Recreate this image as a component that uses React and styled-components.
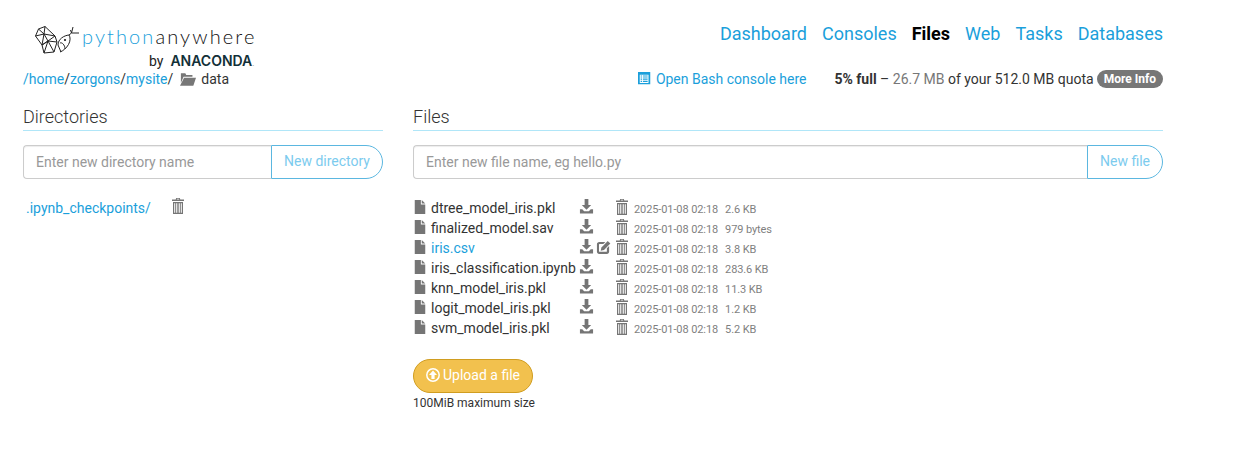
import styled, { createGlobalStyle } from "styled-components";

const files = [
  { name: "dtree_model_iris.pkl", size: "2.6 KB" },
  { name: "finalized_model.sav", size: "979 bytes" },
  { name: "iris.csv", size: "3.8 KB", editable: true },
  { name: "iris_classification.ipynb", size: "283.6 KB" },
  { name: "knn_model_iris.pkl", size: "11.3 KB" },
  { name: "logit_model_iris.pkl", size: "1.2 KB" },
  { name: "svm_model_iris.pkl", size: "5.2 KB" },
];

const navLinks = ["Dashboard", "Consoles", "Files", "Web", "Tasks", "Databases"];

function Glyph({ size = 16, children, color = "#777" }) {
  return (
    <svg width={size} height={size} viewBox="0 0 16 16" fill={color} style={{ display: "block", flex: "none" }}>
      {children}
    </svg>
  );
}

const FileIcon = () => (
  <Glyph size={14} color="#757575">
    <path d="M2 0h7v5h5v11H2z" />
    <path d="M10 0l4 4h-4z" />
  </Glyph>
);

const DownloadIcon = () => (
  <Glyph size={15} color="#757575">
    <path d="M6 0h4v6.500h3l-5 5-5-5h3z" />
    <path d="M1 11h2.500l2 2h5l2-2H15v4.500H1z" />
  </Glyph>
);

const EditIcon = () => (
  <Glyph size={15} color="#757575">
    <path d="M3.500 2H10L7.800 4.200H3.800c-.4 0-.6.2-.6.6v7.200c0 .4.2.6.6.6h7.200c.4 0 .6-.2.6-.6V8.800L14 6.400v6.200C14 13.900 13 15 11.600 15H3.400C2 15 1 13.900 1 12.600V4.400C1 3 2 2 3.500 2z" />
    <path d="M12.500 1l2.800 2.800-6.800 6.900-3.500.8.800-3.600z" />
  </Glyph>
);

const TrashIcon = () => (
  <Glyph size={16} color="#757575">
    <path d="M6.200 0h3.600l.5 1.400H14v1.600H2V1.400h3.700zM7 .8l-.2.6h2.400L9 .8z" fillRule="evenodd" />
    <path d="M3 4h10v12H3zM4.200 5.200v9.600h1V5.200zm2 0v9.600h1.100V5.200zm2.500 0v9.600h1.100V5.200zm2.100 0v9.600h1V5.200z" fillRule="evenodd" />
  </Glyph>
);

const FolderOpenIcon = () => (
  <svg width="16" height="13" viewBox="0 0 18 14" fill="#777" style={{ display: "block" }}>
    <path d="M1 0h5l1 2h7v2H4L1 11z" />
    <path d="M4.600 5H18l-3 9H0z" />
  </svg>
);

const ListIcon = () => (
  <Glyph size={14} color="#1b9fdb">
    <path
      fillRule="evenodd"
      d="M0 0h14v14H0zM2 3v9.500h10V3zM3 4h1.600v1.200H3zm2.600 0H11v1.200H5.600zM3 6.200h1.600v1.200H3zm2.600 0H11v1.200H5.600zM3 8.300h1.600v1.200H3zm2.600 0H11v1.200H5.600zM3 10.300h1.600v1.200H3zm2.600 0H11v1.200H5.600z"
    />
  </Glyph>
);

const UploadIcon = () => (
  <svg width="14" height="14" viewBox="0 0 14 14" style={{ display: "block", flex: "none" }}>
    <circle cx="7" cy="7" r="6.200" fill="none" stroke="#fff" strokeWidth="1.500" />
    <path d="M7 2.500L11 7H8.600v4H5.400V7H3z" fill="#fff" />
  </svg>
);

const FishLogo = () => (
  <svg width="45" height="30" viewBox="0 0 45 30" fill="none" stroke="#222" strokeWidth="1" strokeLinejoin="round" style={{ display: "block" }}>
    <path d="M0.500 10L3.500 3 10 0.500 20 10 22 16 19 26 9 27 7 19 0.500 10z" />
    <path d="M3.500 3L9 8 10 0.500M9 8L20 10 13 15 9 8 0.500 10M9 8L7 19 13 15 19 26M13 15L9 27M13 15L22 16M7 19L13 15" />
    <path d="M23 19c0-6 6-9.500 11-10 1.500 2 1.500 6-.5 9.500C31.500 22 28 25 25 26" />
    <path d="M23 19l3 7M25 17c2-1 5 2 5 6" />
    <path d="M34 9l2.500-2L38 1M36.500 7L44 7M36.500 7l-1-3" />
    <circle cx="30" cy="14" r="0.700" fill="#222" />
  </svg>
);

export default function App() {
  return (
    <>
      <GlobalStyle />
      <Page>
        <Header>
          <Logo>
            <FishLogo />
            <LogoText>
              <Wordmark>
                <b>python</b>anywhere
              </Wordmark>
              <ByLine>
                by <strong>ANACONDA</strong><small>.</small>
              </ByLine>
            </LogoText>
          </Logo>
          <Nav>
            {navLinks.map(link => (
              <NavLink key={link} $active={link === "Files"}>{link}</NavLink>
            ))}
          </Nav>
        </Header>

        <InfoBar>
          <Breadcrumb>
            <a>/home</a>/<a>zorgons</a>/<a>mysite</a>/
            <FolderSlot><FolderOpenIcon /></FolderSlot>
            data
          </Breadcrumb>
          <Status>
            <BashLink><ListIcon /> Open Bash console here</BashLink>
            <Quota>
              <strong>5% full</strong> – <Muted>26.7 MB</Muted> of your 512.0 MB quota
              <Badge>More Info</Badge>
            </Quota>
          </Status>
        </InfoBar>

        <Columns>
          <section>
            <SectionTitle>Directories</SectionTitle>
            <InputGroup>
              <TextInput placeholder="Enter new directory name" />
              <AddButton>New directory</AddButton>
            </InputGroup>
            <DirRow>
              <a>.ipynb_checkpoints/</a>
              <TrashIcon />
            </DirRow>
          </section>

          <section>
            <SectionTitle>Files</SectionTitle>
            <InputGroup>
              <TextInput placeholder="Enter new file name, eg hello.py" />
              <AddButton>New file</AddButton>
            </InputGroup>
            <FileList>
              {files.map(file => (
                <FileRow key={file.name}>
                  <FileIcon />
                  <FileName $link={file.editable}>{file.name}</FileName>
                  <DownloadIcon />
                  <EditSlot>{file.editable && <EditIcon />}</EditSlot>
                  <TrashIcon />
                  <FileMeta>2025-01-08 02:18</FileMeta>
                  <FileMeta>{file.size}</FileMeta>
                </FileRow>
              ))}
            </FileList>
            <UploadButton><UploadIcon /> Upload a file</UploadButton>
            <UploadHint>100MiB maximum size</UploadHint>
          </section>
        </Columns>
      </Page>
    </>
  );
}

const GlobalStyle = createGlobalStyle`
  * {
    box-sizing: border-box;
  }

  body {
    margin: 0;
    background-color: #fff;
    color: #333;
    font-family: Roboto, "Liberation Sans", sans-serif;
    font-size: 14px;
  }

  a {
    color: #1b9fdb;
  }
`;

const Page = styled.div`
  width: 1140px;
  margin-left: 23px;
`;

const Header = styled.header`
  display: flex;
  justify-content: space-between;
  align-items: flex-start;
  height: 69px;
`;

const Logo = styled.div`
  display: flex;
  align-items: flex-start;
  gap: 2px;
  padding: 26px 0 0 12px;
`;

const LogoText = styled.div`
  display: flex;
  flex-direction: column;
  align-items: flex-end;
`;

const Wordmark = styled.div`
  font-family: Lato, sans-serif;
  font-weight: 300;
  font-size: 20px;
  line-height: 22px;
  letter-spacing: 2.100px;
  margin-top: -1px;
  color: #111;
  white-space: nowrap;

  b {
    font-weight: 300;
    color: #1b9fdb;
  }
`;

const ByLine = styled.div`
  display: flex;
  align-items: baseline;
  gap: 7px;
  font-size: 14px;
  line-height: 16px;
  margin: 6px 2px 0 0;
  color: #222;

  strong {
    font-family: Inter, sans-serif;
    font-weight: 600;
    font-size: 14px;
    color: #123038;
    letter-spacing: 0;
  }

  small {
    margin-left: -7px;
    font-size: 8px;
    color: #888;
  }
`;

const Nav = styled.nav`
  display: flex;
  gap: 15px;
  padding-top: 22px;
`;

const NavLink = styled.a`
  font-size: 18px;
  line-height: 24px;
  font-weight: ${props => (props.$active ? 700 : 400)};
  color: ${props => (props.$active ? "#000" : "#1b9fdb")};
`;

const InfoBar = styled.div`
  display: flex;
  justify-content: space-between;
  align-items: center;
  height: 20px;
`;

const Breadcrumb = styled.div`
  display: flex;
  align-items: center;
`;

const FolderSlot = styled.span`
  margin: 0 5px 0 7px;
`;

const Status = styled.div`
  display: flex;
  align-items: center;
  gap: 28px;
`;

const BashLink = styled.a`
  display: flex;
  align-items: center;
  gap: 4px;
`;

const Quota = styled.div`
  display: flex;
  align-items: center;
  white-space: pre-wrap;
  color: #333;
`;

const Muted = styled.span`
  color: #777;
`;

const Badge = styled.span`
  margin-left: 3px;
  padding: 0 7px;
  height: 18px;
  line-height: 18px;
  border-radius: 9px;
  background-color: #777;
  color: #fff;
  font-size: 12px;
  font-weight: 700;
`;

const Columns = styled.div`
  display: grid;
  grid-template-columns: 360px 750px;
  column-gap: 30px;
  margin-top: 18px;
`;

const SectionTitle = styled.h2`
  margin: 0 0 14px;
  padding-bottom: 2px;
  height: 24px;
  border-bottom: 1px solid #b0e6f8;
  font-size: 18px;
  line-height: 20px;
  font-weight: 300;
  color: #333;
`;

const InputGroup = styled.div`
  display: flex;
  height: 34px;
`;

const TextInput = styled.input`
  flex: 1;
  min-width: 0;
  padding: 0 12px;
  border: 1px solid #ccc;
  border-right: none;
  border-radius: 4px 0 0 4px;
  box-shadow: inset 0 1px 1px rgba(0, 0, 0, 0.075);
  font-family: inherit;
  font-size: 14px;
  color: #555;
  outline: none;

  &::placeholder {
    color: #999;
    opacity: 1;
  }
`;

const AddButton = styled.button`
  padding: 0 12px 3px;
  background-color: #fff;
  border: 1px solid #5bb7e0;
  border-radius: 0 17px 17px 0;
  font-family: inherit;
  font-size: 14px;
  color: #7ccbee;
`;

const DirRow = styled.div`
  display: flex;
  align-items: center;
  gap: 19px;
  margin-top: 21px;
  padding-left: 3px;

  svg {
    margin-top: -4px;
  }
`;

const FileList = styled.div`
  margin-top: 19px;
`;

const FileRow = styled.div`
  display: flex;
  align-items: center;
  height: 20px;

  svg {
    margin-top: -3px;
  }
`;

const FileName = styled.a`
  width: 148px;
  margin-left: 4px;
  color: ${props => (props.$link ? "#1b9fdb" : "#333")};
  white-space: nowrap;
`;

const EditSlot = styled.span`
  display: block;
  width: 18px;
  height: 16px;
  margin-left: 2px;

  svg {
    margin-top: 0;
  }
`;

const FileMeta = styled.span`
  margin-left: 4px;
  font-size: 11px;
  letter-spacing: -0.1px;
  color: #7f7f7f;
  padding-top: 2px;

  & + & {
    margin-left: 7px;
  }
`;

const UploadButton = styled.button`
  display: flex;
  align-items: center;
  gap: 3px;
  margin-top: 21px;
  padding: 0 12px 2px;
  height: 34px;
  background-color: #f2c14e;
  border: 1px solid #d09d20;
  border-radius: 17px;
  color: #fff;
  font-family: inherit;
  font-size: 14px;
`;

const UploadHint = styled.div`
  margin-top: 2px;
  font-size: 12px;
  line-height: 16px;
  color: #333;
`;
